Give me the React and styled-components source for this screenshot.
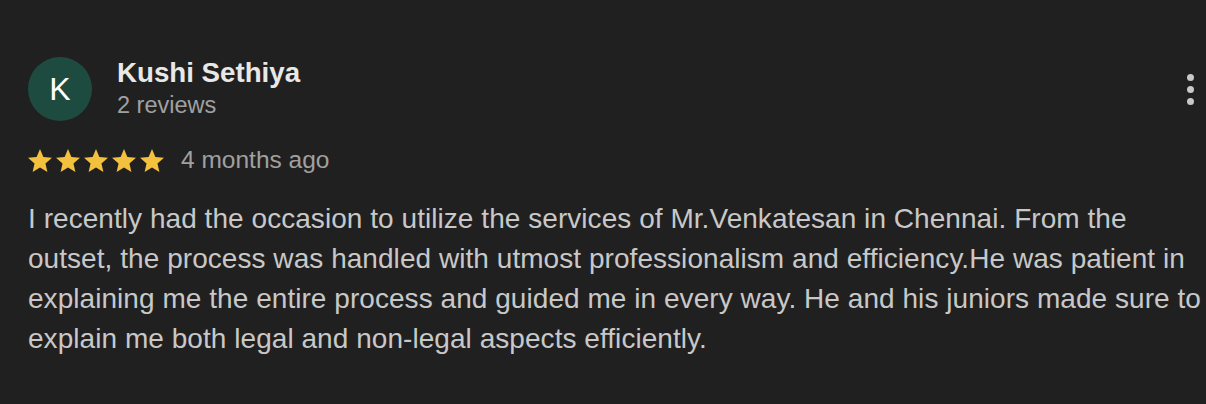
// Packages
import React from "react"
import styled, { createGlobalStyle } from "styled-components"

// Styles
const GlobalStyle = createGlobalStyle`
    html, body {
        margin: 0;
        padding: 0;
        background-color: #202020;
    }

    body {
        font-family: "Liberation Sans", Arial, sans-serif;
    }
`

const Card = styled.article`
    width: 1206px;
    height: 404px;
    box-sizing: border-box;
    padding: 56px 0 0 28px;
    background-color: #202020;
`

const Header = styled.header`
    display: flex;
    align-items: flex-start;
    padding-right: 12px;
`

const Avatar = styled.div`
    width: 64px;
    height: 64px;
    margin-top: 1px;
    border-radius: 50%;
    background-color: #1d4b3f;
    color: #ffffff;
    font-size: 32px;
    display: flex;
    align-items: center;
    justify-content: center;
    flex-shrink: 0;
`

const Author = styled.div`
    margin-left: 25px;
    flex: 1;
    display: flex;
    flex-direction: column;
`

const Name = styled.span`
    font-size: 27.7px;
    line-height: 34px;
    font-weight: 700;
    color: #e8e8e8;
`

const Muted = styled.span`
    font-size: ${props => props.$size || 24}px;
    line-height: 30px;
    color: #a0a0a0;
`

const Menu = styled.button`
    align-self: center;
    margin-top: 1px;
    padding: 0;
    border: none;
    background: none;
    display: flex;
    flex-direction: column;
    gap: 5px;
    cursor: pointer;
`

const Dot = styled.span`
    width: 7px;
    height: 7px;
    border-radius: 50%;
    background-color: #c8c8c8;
`

const Meta = styled.div`
    margin-top: 24px;
    display: flex;
    align-items: center;
    gap: 17px;
`

const Stars = styled.div`
    display: flex;
    gap: 4px;
`

const Star = styled.svg`
    width: 24px;
    height: 23px;
    fill: #f4c13f;
`

const Text = styled.p`
    margin: 24px 0 0;
    font-size: 28px;
    line-height: 40px;
    letter-spacing: 0.05px;
    color: #c8c8c8;
`

const review = {
    initial: "K",
    name: "Kushi Sethiya",
    reviews: "2 reviews",
    rating: 5,
    date: "4 months ago",
    text: "I recently had the occasion to utilize the services of Mr.Venkatesan in Chennai. From the outset, the process was handled with utmost professionalism and efficiency.He was patient in explaining me the entire process and guided me in every way. He and his juniors made sure to explain me both legal and non-legal aspects efficiently.",
}

function App() {
    return (
        <>
            <GlobalStyle />

            <Card>
                <Header>
                    <Avatar>{review.initial}</Avatar>

                    <Author>
                        <Name>{review.name}</Name>
                        <Muted $size={23.5}>{review.reviews}</Muted>
                    </Author>

                    <Menu aria-label="More">
                        <Dot />
                        <Dot />
                        <Dot />
                    </Menu>
                </Header>

                <Meta>
                    <Stars>
                        {Array.from({ length: review.rating }).map((_, i) => (
                            <Star key={i} viewBox="2 2 20 19">
                                <path d="M12 17.27L18.18 21l-1.64-7.03L22 9.24l-7.19-.61L12 2 9.19 8.63 2 9.24l5.46 4.73L5.82 21z" />
                            </Star>
                        ))}
                    </Stars>
                    <Muted $size={24.5}>{review.date}</Muted>
                </Meta>

                <Text>{review.text}</Text>
            </Card>
        </>
    )
}

export default App
